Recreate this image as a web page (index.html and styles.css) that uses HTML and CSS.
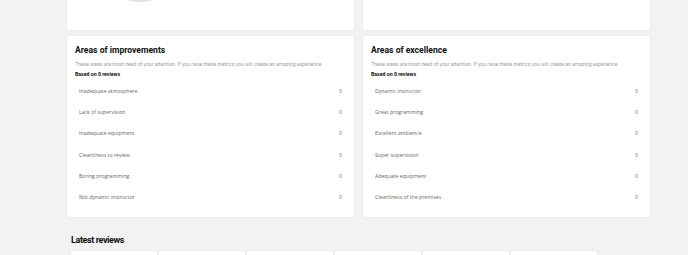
FILE: index.html
```html
<!DOCTYPE html>
<html lang="en">
<head>
    <meta charset="UTF-8">
    <meta name="viewport" content="width=device-width, initial-scale=1.0">
    <title>Dashboard - Areas</title>
    <link rel="stylesheet" href="styles.css">
</head>
<body>

<div class="page">
    <!-- Top cards (scrolled, only the bottom is visible) -->
    <div class="grid">
        <div class="card card-top">
            <svg class="chart" width="287" height="30" viewBox="0 0 287 30">
                <circle cx="73" cy="-41" r="41.5" fill="none" stroke="#e2e2e2" stroke-width="3"/>
            </svg>
        </div>
        <div class="card card-top"></div>
    </div>

    <div class="grid">
        <div class="card areas">
            <h2>Areas of improvements</h2>
            <p class="desc">These areas are most need of your attention. If you raise these metrics you will create an amazing experience</p>
            <p class="based">Based on 0 reviews</p>
            <ul class="metrics">
                <li><span>Inadequate atmosphere</span><span>0</span></li>
                <li><span>Lack of supervision</span><span>0</span></li>
                <li><span>Inadequate equipment</span><span>0</span></li>
                <li><span>Cleanliness to review</span><span>0</span></li>
                <li><span>Boring programming</span><span>0</span></li>
                <li><span>Not dynamic instructor</span><span>0</span></li>
            </ul>
        </div>
        <div class="card areas">
            <h2>Areas of excellence</h2>
            <p class="desc">These areas are most need of your attention. If you raise these metrics you will create an amazing experience</p>
            <p class="based">Based on 0 reviews</p>
            <ul class="metrics">
                <li><span>Dynamic instructor</span><span>0</span></li>
                <li><span>Great programming</span><span>0</span></li>
                <li><span>Excellent ambience</span><span>0</span></li>
                <li><span>Super supervision</span><span>0</span></li>
                <li><span>Adequate equipment</span><span>0</span></li>
                <li><span>Cleanliness of the premises</span><span>0</span></li>
            </ul>
        </div>
    </div>

    <h3 class="section-title">Latest reviews</h3>
    <div class="reviews">
        <div class="review"></div>
        <div class="review"></div>
        <div class="review"></div>
        <div class="review"></div>
        <div class="review"></div>
        <div class="review"></div>
    </div>
</div>

</body>
</html>
```

FILE: styles.css
```css
body {
    margin: 0;
    background-color: #f2f2f2;
    font-family: Roboto, "Liberation Sans", sans-serif;
    color: #111;
    overflow: hidden;
}
.page {
    padding-left: 67px;
    width: 583px;
}
.grid {
    display: grid;
    grid-template-columns: 287px 287px;
    gap: 9px;
    margin-bottom: 6px;
}
.card {
    background-color: white;
    border-radius: 2px;
    box-shadow: 0 0 2px rgba(0, 0, 0, 0.08);
}
.card-top {
    height: 30px;
    border-top-left-radius: 0;
    border-top-right-radius: 0;
}
.chart {
    display: block;
}
.areas {
    height: 181px;
    box-sizing: border-box;
    padding: 8px 12px 0 8px;
}
.areas h2 {
    font-size: 8.6px;
    font-weight: 700;
    line-height: 12px;
    margin: 0;
}
.desc {
    font-size: 5.1px;
    color: #a0a0a0;
    line-height: 8px;
    margin: 4px 0 0;
    white-space: nowrap;
}
.based {
    font-size: 5.2px;
    font-weight: 700;
    line-height: 8px;
    margin: 1.5px 0 0;
}
.metrics {
    list-style: none;
    padding: 0 0 0 4px;
    margin: 3.5px 0 0;
}
.metrics li {
    display: flex;
    justify-content: space-between;
    height: 21.2px;
    line-height: 21px;
    font-family: "Open Sans", Roboto, sans-serif;
    font-size: 5.2px;
    color: #666;
}
.section-title {
    font-size: 9px;
    font-weight: 700;
    letter-spacing: -0.4px;
    line-height: 12px;
    margin: 17px 0 5px 4px;
}
.reviews {
    display: flex;
    gap: 2px;
    margin-left: 4px;
}
.review {
    width: 86px;
    height: 40px;
    background-color: white;
    border-radius: 2px;
    box-shadow: 0 0 2px rgba(0, 0, 0, 0.08);
}
```
